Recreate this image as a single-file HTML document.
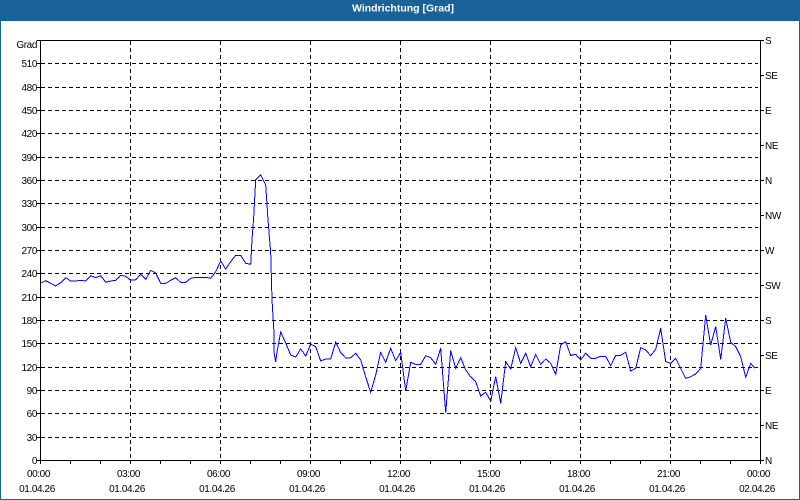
<!DOCTYPE html>
<html><head><meta charset="utf-8"><title>Windrichtung</title>
<style>
html,body{margin:0;padding:0;background:#fff}
#w{position:relative;width:800px;height:500px;overflow:hidden;background:#fff}
svg{position:absolute;left:0;top:0}
text{font-family:"Liberation Sans",sans-serif;font-size:10px;fill:#000;letter-spacing:-0.4px}
.l{text-anchor:end}
.c{text-anchor:middle}
</style></head><body><div id="w">
<svg width="800" height="500" viewBox="0 0 800 500" xmlns="http://www.w3.org/2000/svg">
<rect x="0" y="0" width="800" height="21" fill="#1a6298"/>
<rect x="0" y="0" width="1" height="500" fill="#1a6298"/>
<rect x="799" y="0" width="1" height="500" fill="#1a6298"/>
<rect x="0" y="499" width="800" height="1" fill="#1a6298"/>
<text x="403" y="11.5" class="c" style="fill:#fff;font-weight:bold;font-size:10.5px;letter-spacing:0">Windrichtung [Grad]</text>
<g stroke="#000" stroke-width="1" stroke-dasharray="4 3" shape-rendering="crispEdges" fill="none">
<path d="M41 63.5H758M41 87.5H758M41 110.5H758M41 133.5H758M41 157.5H758M41 180.5H758M41 203.5H758M41 227.5H758M41 250.5H758M41 273.5H758M41 297.5H758M41 320.5H758M41 343.5H758M41 367.5H758M41 390.5H758M41 413.5H758M41 437.5H758"/>
<path d="M130.5 41V460M220.5 41V460M310.5 41V460M400.5 41V460M490.5 41V460M580.5 41V460M670.5 41V460"/>
</g>
<g stroke="#000" stroke-width="1" shape-rendering="crispEdges" fill="none">
<rect x="40.5" y="40.5" width="720" height="420"/>
<path d="M37 40.5H40M37 63.5H40M37 87.5H40M37 110.5H40M37 133.5H40M37 157.5H40M37 180.5H40M37 203.5H40M37 227.5H40M37 250.5H40M37 273.5H40M37 297.5H40M37 320.5H40M37 343.5H40M37 367.5H40M37 390.5H40M37 413.5H40M37 437.5H40M37 460.5H40"/>
<path d="M761 40.5H764M761 75.5H764M761 110.5H764M761 145.5H764M761 180.5H764M761 215.5H764M761 250.5H764M761 285.5H764M761 320.5H764M761 355.5H764M761 390.5H764M761 425.5H764M761 460.5H764"/>
<path d="M40.5 461V464M70.5 461V464M100.5 461V464M130.5 461V464M160.5 461V464M190.5 461V464M220.5 461V464M250.5 461V464M280.5 461V464M310.5 461V464M340.5 461V464M370.5 461V464M400.5 461V464M430.5 461V464M460.5 461V464M490.5 461V464M520.5 461V464M550.5 461V464M580.5 461V464M610.5 461V464M640.5 461V464M670.5 461V464M700.5 461V464M730.5 461V464M760.5 461V464"/>
</g>
<polyline fill="none" stroke="#0000ff" stroke-width="1" shape-rendering="crispEdges" points="41,283 45.7,280.7 50.7,283.3 55.7,286 60.7,282.7 65.7,277.7 70.7,281 75.7,281 80.7,280.3 85.7,281 90.7,275.7 95.7,277.7 100.7,275.7 105.7,282.3 110.7,281 115.7,280.3 120.7,275.3 125.7,276.3 130.7,280.3 135.7,279.7 140.7,274.3 145.7,279.3 150.7,270.3 155.7,273 160.7,283.3 165.7,283.3 170.7,280.3 175.7,277.7 180.7,282.3 185.7,282.3 190.7,278.3 195.7,277.3 200.7,277.3 205.7,277.3 210.7,278.3 215.7,271.7 220.7,261 225.7,269 230.7,261.7 235.7,255.3 240.7,255.3 245.7,263.3 250.7,264.3 252,240 253.5,220 255.7,180 260.7,175 265.7,185 268,220 270.7,253 272,300 274,333 274,352 275.7,362 277,352 280.7,332 285.7,343 290.7,355 295.7,357 300.7,349 305.7,356 310.7,344 315.7,346.7 320.7,361 325.7,359 330.7,359 335.7,342 340.7,352.7 345.7,358 350.7,357.7 355.7,353.3 360.7,360 365.7,377 370.7,392.3 375.7,375 380.7,352.3 385.7,362.3 390.7,348.3 395.7,360.7 400.7,352.3 405.7,391 410.7,362.3 415.7,364.3 420.7,364.3 425.7,355.7 430.7,357.7 435.7,364.3 440.7,348.3 445.7,412.7 450.7,350.7 455.7,368.3 460.7,357.7 465.7,370 470.7,376.7 475.7,381.7 480.7,396 485.7,392.3 490.7,401 495.7,376.7 500.7,403.3 505.7,361.7 510.7,369 515.7,347.7 520.7,363.3 525.7,353.3 530.7,366.7 535.7,354.3 540.7,364.3 545.7,359 550.7,363.3 555.7,374.3 560.7,345 565.7,341.7 570.7,355.5 575.7,354.3 580.7,360 585.7,353.3 590.7,358.3 595.7,358.3 600.7,356.3 605.7,356.3 610.7,365.7 615.7,355.3 620.7,355.3 625.7,352.3 630.7,371 635.7,368.3 640.7,347.7 645.7,350 650.7,355.7 655.7,349.3 660.7,328.3 665.7,361.7 670.7,363.3 675.7,358.3 680.7,368.3 685.7,378.3 690.7,376.7 695.7,374 700.7,368.3 705.7,315 710.7,345 715.7,326.7 720.7,359.3 725.7,318.3 730.7,342.3 735.7,346.7 740.7,356.7 745.7,377.3 750.7,363.3 755,368.3"/>
<text x="37" y="48" class="l">Grad</text>
<text x="37" y="67" class="l">510</text>
<text x="37" y="91" class="l">480</text>
<text x="37" y="114" class="l">450</text>
<text x="37" y="137" class="l">420</text>
<text x="37" y="161" class="l">390</text>
<text x="37" y="184" class="l">360</text>
<text x="37" y="207" class="l">330</text>
<text x="37" y="231" class="l">300</text>
<text x="37" y="254" class="l">270</text>
<text x="37" y="277" class="l">240</text>
<text x="37" y="301" class="l">210</text>
<text x="37" y="324" class="l">180</text>
<text x="37" y="347" class="l">150</text>
<text x="37" y="371" class="l">120</text>
<text x="37" y="394" class="l">90</text>
<text x="37" y="417" class="l">60</text>
<text x="37" y="441" class="l">30</text>
<text x="37" y="464" class="l">0</text>
<text x="765" y="44">S</text>
<text x="765" y="79">SE</text>
<text x="765" y="114">E</text>
<text x="765" y="149">NE</text>
<text x="765" y="184">N</text>
<text x="765" y="219">NW</text>
<text x="765" y="254">W</text>
<text x="765" y="289">SW</text>
<text x="765" y="324">S</text>
<text x="765" y="359">SE</text>
<text x="765" y="394">E</text>
<text x="765" y="429">NE</text>
<text x="765" y="464">N</text>
<text x="38.5" y="477" class="c">00:00</text><text x="37" y="492" class="c">01.04.26</text>
<text x="128.5" y="477" class="c">03:00</text><text x="127" y="492" class="c">01.04.26</text>
<text x="218.5" y="477" class="c">06:00</text><text x="217" y="492" class="c">01.04.26</text>
<text x="308.5" y="477" class="c">09:00</text><text x="307" y="492" class="c">01.04.26</text>
<text x="398.5" y="477" class="c">12:00</text><text x="397" y="492" class="c">01.04.26</text>
<text x="488.5" y="477" class="c">15:00</text><text x="487" y="492" class="c">01.04.26</text>
<text x="578.5" y="477" class="c">18:00</text><text x="577" y="492" class="c">01.04.26</text>
<text x="668.5" y="477" class="c">21:00</text><text x="667" y="492" class="c">01.04.26</text>
<text x="758.5" y="477" class="c">00:00</text><text x="757" y="492" class="c">02.04.26</text>
</svg>
</div></body></html>
